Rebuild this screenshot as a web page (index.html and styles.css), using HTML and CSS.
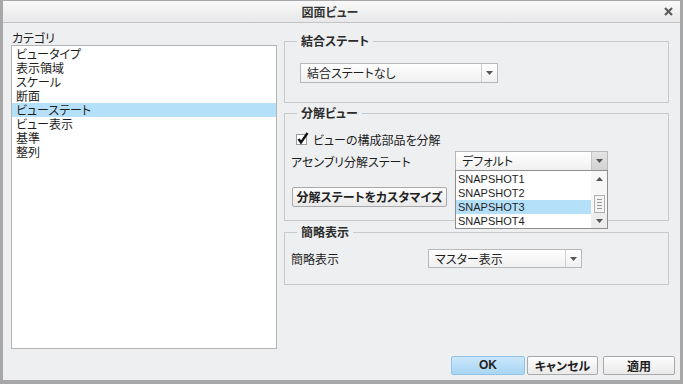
FILE: index.html
```html
<!DOCTYPE html>
<html lang="ja">
<head>
  <meta charset="UTF-8" />
  <title>図面ビュー</title>
  <link rel="stylesheet" href="styles.css">
</head>
<body>
  <div class="window">
    <div class="titlebar">
      <span class="title">図面ビュー</span>
      <span class="close">
        <svg width="9" height="9" viewBox="0 0 9 9"><path d="M1 1 L8 8 M8 1 L1 8" stroke="#5c5c5c" stroke-width="2.2"/></svg>
      </span>
    </div>

    <div class="main">
      <div class="category">
        <div class="cat-label">カテゴリ</div>
        <ul class="listbox">
          <li>ビュータイプ</li>
          <li>表示領域</li>
          <li>スケール</li>
          <li>断面</li>
          <li class="selected">ビューステート</li>
          <li>ビュー表示</li>
          <li>基準</li>
          <li>整列</li>
        </ul>
      </div>

      <div class="settings">
        <fieldset class="group group-merge">
          <legend>結合ステート</legend>
          <div class="combo combo-merge">
            <span class="combo-text">結合ステートなし</span>
            <span class="combo-btn"><svg width="7" height="4"><polygon points="0,0 7,0 3.5,4" fill="#555"/></svg></span>
          </div>
        </fieldset>

        <fieldset class="group group-explode">
          <legend>分解ビュー</legend>
          <label class="check-row">
            <svg class="checkbox" width="14" height="14" viewBox="0 0 14 14">
              <rect x="0.5" y="2.5" width="10" height="10" fill="#fff" stroke="#9c9c9c"/>
              <path d="M2.5 7 L5 10.5 L11.5 1" fill="none" stroke="#111" stroke-width="2.3"/>
            </svg>
            ビューの構成部品を分解
          </label>
          <div class="field-row">
            <span class="field-label">アセンブリ分解ステート</span>
            <div class="combo combo-state">
              <span class="combo-text">デフォルト</span>
              <span class="combo-btn"><svg width="7" height="4"><polygon points="0,0 7,0 3.5,4" fill="#555"/></svg></span>
              <div class="dropdown">
                <ul class="dropdown-items">
                  <li>SNAPSHOT1</li>
                  <li>SNAPSHOT2</li>
                  <li class="selected">SNAPSHOT3</li>
                  <li>SNAPSHOT4</li>
                </ul>
                <div class="scrollbar">
                  <span class="sb-btn"><svg width="7" height="4"><polygon points="0,4 7,4 3.5,0" fill="#555"/></svg></span>
                  <span class="sb-track"><span class="sb-thumb"><i></i><i></i><i></i><i></i></span></span>
                  <span class="sb-btn"><svg width="7" height="4"><polygon points="0,0 7,0 3.5,4" fill="#555"/></svg></span>
                </div>
              </div>
            </div>
          </div>
          <button class="btn btn-custom">分解ステートをカスタマイズ</button>
        </fieldset>

        <fieldset class="group group-simple">
          <legend>簡略表示</legend>
          <div class="field-row">
            <span class="field-label simple-label">簡略表示</span>
            <div class="combo combo-simple">
              <span class="combo-text">マスター表示</span>
              <span class="combo-btn"><svg width="7" height="4"><polygon points="0,0 7,0 3.5,4" fill="#555"/></svg></span>
            </div>
          </div>
        </fieldset>
      </div>
    </div>

    <div class="footer">
      <button class="btn btn-ok">OK</button>
      <button class="btn btn-cancel">キャンセル</button>
      <button class="btn btn-apply">適用</button>
    </div>
  </div>
</body>
</html>
```

FILE: styles.css
```css
body {
  margin: 0;
  font-family: "Noto Sans CJK JP", sans-serif;
  font-size: 12px;
  color: #1e1e1e;
  font-feature-settings: "palt";
}
.window {
  width: 683px;
  height: 384px;
  box-sizing: border-box;
  border: 3px solid #a7a7a7;
  border-top-width: 1px;
  border-bottom-width: 4px;
  background: #eeeff1;
  display: flex;
  flex-direction: column;
}
.titlebar {
  height: 21px;
  border-bottom: 1px solid #c3c3c5;
  background: linear-gradient(#f9f9f9, #e8e8ea);
  display: flex;
  align-items: center;
}
.title {
  flex: 1;
  text-align: center;
  font-weight: bold;
  color: #333;
  line-height: 14px;
}
.close {
  width: 23px;
  display: flex;
  justify-content: center;
}
.main {
  height: 329px;
  box-sizing: border-box;
  padding: 8px 0 0 8px;
  display: flex;
}
.category {
  width: 266px;
}
.cat-label {
  height: 14px;
  line-height: 14px;
  padding-left: 1px;
}
.listbox {
  list-style: none;
  margin: 0;
  padding: 1px 0 0;
  height: 304px;
  box-sizing: border-box;
  border: 1px solid #b4b4b4;
  background: #fff;
}
.listbox li {
  height: 14px;
  line-height: 14px;
  padding-left: 4px;
}
.listbox li.selected {
  background: #b5e0fa;
}
.settings {
  width: 385px;
  margin-left: 7px;
  padding-top: 3px;
}
.group {
  margin: 0;
  padding: 0 5px;
  min-width: 0;
  border: 1px solid #c8c9cb;
}
.group legend {
  padding: 0 4px;
  margin-left: 7px;
  font-weight: bold;
  line-height: 14px;
  color: #2b2b2b;
}
.combo {
  display: flex;
  height: 20px;
  box-sizing: border-box;
  border: 1px solid #b8b8b8;
  background: linear-gradient(#fff, #f0f0f0);
}
.combo-text {
  flex: 1;
  padding-left: 6px;
  line-height: 18px;
}
.combo-btn {
  width: 15px;
  border-left: 1px solid #d0d0d0;
  display: flex;
  align-items: center;
  justify-content: center;
}
.combo-merge {
  width: 198px;
  margin: 15px 0 19px 10px;
}
.group-explode {
  margin-top: 3px;
  padding-bottom: 13px;
}
.check-row {
  margin-top: 12px;
  height: 14px;
  display: flex;
  align-items: center;
}
.checkbox {
  margin: 0 3px 0 6px;
}
.field-row {
  display: flex;
  align-items: center;
  margin-top: 5px;
}
.field-label {
  width: 164px;
  padding-left: 1px;
}
.combo-state {
  width: 153px;
  position: relative;
}
.combo-state .combo-btn {
  background: linear-gradient(#e4e4e4, #d2d2d2);
  border-left-color: #c4c4c4;
}
.dropdown {
  position: absolute;
  top: 18px;
  left: -1px;
  width: 153px;
  height: 59px;
  box-sizing: border-box;
  border: 1px solid #8e8e8e;
  background: #fff;
  display: flex;
}
.dropdown-items {
  flex: 1;
  list-style: none;
  margin: 0;
  padding: 1px 0 0;
  font-family: "Liberation Sans", sans-serif;
  font-size: 11px;
}
.dropdown-items li {
  height: 14px;
  line-height: 14px;
  padding-left: 2px;
}
.dropdown-items li.selected {
  background: #b5e0fa;
}
.scrollbar {
  width: 16px;
  display: flex;
  flex-direction: column;
  background: #f7f7f7;
}
.sb-btn {
  height: 16px;
  display: flex;
  align-items: center;
  justify-content: center;
}
.sb-btn:last-child {
  height: 15px;
  background: #ececec;
}
.sb-track {
  height: 26px;
  display: flex;
  align-items: flex-end;
  justify-content: center;
}
.sb-thumb {
  width: 11px;
  height: 18px;
  box-sizing: border-box;
  border: 1px solid #b0b0b0;
  background: #f4f4f4;
  display: flex;
  flex-direction: column;
  justify-content: center;
  gap: 2px;
  padding: 0 2px;
}
.sb-thumb i {
  display: block;
  height: 1px;
  background: #9a9a9a;
}
.btn {
  height: 20px;
  box-sizing: border-box;
  border: 1px solid #a9a9a9;
  border-radius: 2px;
  background: linear-gradient(#fdfdfd, #e9e9e9);
  font-family: "Noto Sans CJK JP", sans-serif;
  font-feature-settings: "palt";
  font-size: 12px;
  font-weight: bold;
  color: #222;
  padding: 0;
  line-height: 16px;
}
.btn-custom {
  width: 155px;
  margin: 16px 0 0 2px;
}
.group-simple {
  margin-top: 4px;
  padding-bottom: 16px;
}
.group-simple .field-row {
  margin-top: 10px;
}
.simple-label {
  width: 137px;
}
.combo-simple {
  width: 154px;
  height: 19px;
}
.combo-simple .combo-text {
  line-height: 17px;
}
.footer {
  height: 28px;
  box-sizing: border-box;
  padding: 4px 5px 0 0;
  display: flex;
  justify-content: flex-end;
  align-items: flex-start;
}
.footer .btn {
  height: 19px;
  line-height: 15px;
}
.btn-ok {
  width: 74px;
  background: linear-gradient(#cbe7fb, #a8d5f3);
  border-color: #93c3e6;
  font-family: "Liberation Sans", sans-serif;
}
.btn-cancel {
  width: 71px;
  margin-left: 2px;
}
.btn-apply {
  width: 72px;
  margin-left: 5px;
}
```
